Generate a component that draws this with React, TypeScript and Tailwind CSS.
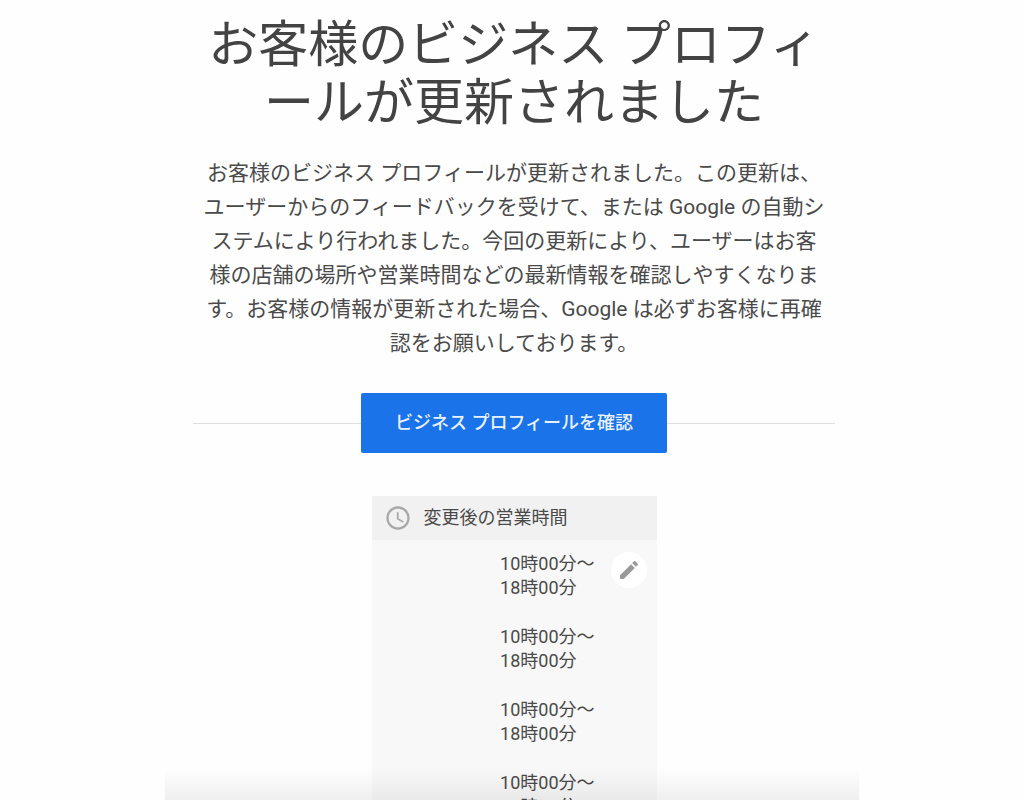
import { FC } from "react";

const openingHours = [
  { id: 1, from: "10時00分〜", to: "18時00分" },
  { id: 2, from: "10時00分〜", to: "18時00分" },
  { id: 3, from: "10時00分〜", to: "18時00分" },
  { id: 4, from: "10時00分〜", to: "18時00分" },
];

const ClockIcon: FC = () => (
  <svg
    viewBox="0 0 24 24"
    className="size-7 shrink-0 fill-[#a8a8a8]"
    aria-hidden="true"
  >
    <path d="M11.99 2C6.47 2 2 6.48 2 12s4.47 10 9.99 10C17.52 22 22 17.52 22 12S17.52 2 11.99 2zM12 20c-4.42 0-8-3.58-8-8s3.58-8 8-8 8 3.58 8 8-3.58 8-8 8zm.5-13H11v6l5.25 3.15.75-1.23-4.5-2.67z" />
  </svg>
);

const PencilIcon: FC = () => (
  <svg viewBox="0 0 24 24" className="size-6 fill-[#9a9a9a]" aria-hidden="true">
    <path d="M3 17.25V21h3.75L17.81 9.94l-3.75-3.75L3 17.25zM20.71 7.04c.39-.39.39-1.02 0-1.41l-2.34-2.34c-.39-.39-1.02-.39-1.41 0l-1.83 1.83 3.75 3.75 1.83-1.83z" />
  </svg>
);

const HoursCard: FC = () => (
  <section className="mx-auto mt-[43px] w-[285px] bg-[#f8f8f8] text-lg leading-6">
    <header className="flex h-11 items-center gap-3 bg-[#f1f1f1] px-3">
      <ClockIcon />
      <h2>変更後の営業時間</h2>
    </header>
    <div className="flex justify-end gap-4 pt-3 pr-[10px]">
      <ul className="flex flex-col gap-[25px]">
        {openingHours.map(({ id, from, to }) => (
          <li key={id}>
            {from}
            <br />
            {to}
          </li>
        ))}
      </ul>
      <button
        aria-label="営業時間を編集"
        className="flex size-9 shrink-0 cursor-pointer items-center justify-center rounded-full bg-white"
      >
        <PencilIcon />
      </button>
    </div>
  </section>
);

export default function App() {
  return (
    <div className="h-screen overflow-hidden bg-[#fefefe] font-['Roboto','Noto_Sans_CJK_JP',sans-serif] text-[#4a4a4a]">
      <main className="relative mx-auto h-full max-w-[694px] overflow-hidden pt-4 pr-6 pl-7">
        <h1 className="text-center text-[50px] leading-[58px] text-[#434343]">
          お客様のビジネス プロフィ
          <br />
          ールが更新されました
        </h1>
        <p className="mt-6 text-center text-[21px] leading-[34px]">
          お客様のビジネス プロフィールが更新されました。この更新は、
          <br />
          ユーザーからのフィードバックを受けて、または Google の自動シ
          <br />
          ステムにより行われました。今回の更新により、ユーザーはお客
          <br />
          様の店舗の場所や営業時間などの最新情報を確認しやすくなりま
          <br />
          す。お客様の情報が更新された場合、Google は必ずお客様に再確
          <br />
          認をお願いしております。
        </p>
        <div className="mt-[33px] flex items-center">
          <div className="h-px flex-1 bg-[#dfdfdf]" />
          <button className="h-[60px] w-[306px] cursor-pointer rounded-xs bg-[#1a73e8] text-lg font-medium text-[#e8f1fd]">
            ビジネス プロフィールを確認
          </button>
          <div className="h-px flex-1 bg-[#dfdfdf]" />
        </div>
        <HoursCard />
        <div className="pointer-events-none absolute inset-x-0 bottom-0 h-8 bg-linear-to-b from-transparent to-black/6" />
      </main>
    </div>
  );
}
